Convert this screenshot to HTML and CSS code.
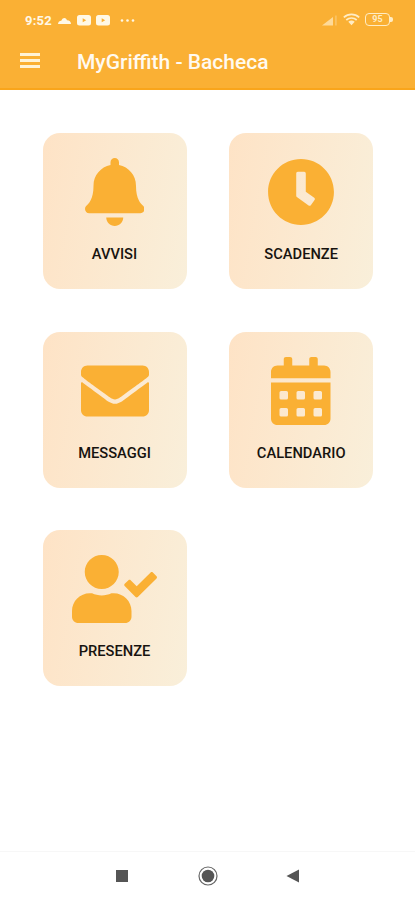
FILE: index.html
```html
<!DOCTYPE html>
<html lang="it">
<head>
  <meta charset="UTF-8" />
  <meta name="viewport" content="width=device-width, initial-scale=1.0" />
  <title>MyGriffith - Bacheca</title>
  <link rel="stylesheet" href="styles.css">
</head>
<body>
  <header class="header">
    <div class="statusbar">
      <span class="time">9:52</span>
      <svg class="notifications" width="80" height="14" viewBox="0 0 80 14" fill="currentColor">
        <path d="M1 11c0-2 1.500-3.200 3.500-3.500C5.800 4.300 8.800 4.300 10 7.200c2.500 0 4 1.500 4 3.800z"/>
        <path fill-rule="evenodd" d="M22.500 2h9a2.500 2.500 0 0 1 2.500 2.500v5.500a2.500 2.500 0 0 1-2.500 2.500h-9a2.500 2.500 0 0 1-2.500-2.500V4.500a2.500 2.500 0 0 1 2.500-2.500zM25.700 5.200v4L29.200 7.200z"/>
        <path fill-rule="evenodd" d="M41.500 2h9a2.500 2.500 0 0 1 2.500 2.500v5.500a2.500 2.500 0 0 1-2.500 2.500h-9a2.500 2.500 0 0 1-2.500-2.500V4.500a2.500 2.500 0 0 1 2.500-2.500zM44.700 5.200v4L48.200 7.200z"/>
        <circle cx="65" cy="7.500" r="1.300"/>
        <circle cx="70.500" cy="7.500" r="1.300"/>
        <circle cx="76" cy="7.500" r="1.300"/>
      </svg>
      <div class="system">
        <svg width="16" height="12" viewBox="0 0 16 12" fill="currentColor">
          <path d="M0 11.500L11 3v8.500z" opacity=".7"/>
          <path d="M13 1.500h1.800v10H13z" opacity=".3"/>
        </svg>
        <svg width="17" height="13" viewBox="0 0 17 13" fill="none" stroke="currentColor" stroke-width="1.700">
          <path d="M.8 4.300c4.400-4 11-4 15.400 0M3.300 7c3-2.700 7.400-2.700 10.400 0"/>
          <path d="M5.300 8.700c2-1.700 4.400-1.700 6.400 0L8.500 12.300z" fill="currentColor" stroke="none"/>
        </svg>
        <span class="battery">95</span>
      </div>
    </div>
    <div class="toolbar">
      <button class="menu" aria-label="Menu"><i></i><i></i><i></i></button>
      <h1>MyGriffith - Bacheca</h1>
    </div>
  </header>

  <main class="board">
    <a class="card">
      <svg class="icon" viewBox="0 0 448 512"><path d="M224 512c35.320 0 63.970-28.650 63.970-64H160.030c0 35.350 28.650 64 63.970 64zm215.390-149.710c-19.320-20.760-55.470-51.990-55.470-154.290 0-77.700-54.480-139.900-127.940-155.160V32c0-17.670-14.320-32-31.980-32s-31.980 14.330-31.980 32v20.840C118.560 68.100 64.080 130.300 64.080 208c0 102.300-36.150 133.530-55.470 154.290-6 6.450-8.660 14.160-8.610 21.710.11 16.400 12.980 32 32.100 32h383.800c19.120 0 32-15.600 32.100-32 .05-7.550-2.610-15.270-8.610-21.710z"/></svg>
      <span class="label">AVVISI</span>
    </a>
    <a class="card">
      <svg class="icon" viewBox="0 0 512 512"><path d="M256 8C119 8 8 119 8 256s111 248 248 248 248-111 248-248S393 8 256 8zm57.100 350.100L224.900 294c-3.100-2.300-4.900-5.900-4.900-9.700V116c0-6.600 5.400-12 12-12h48c6.600 0 12 5.400 12 12v137.700l63.500 46.200c5.400 3.900 6.500 11.400 2.600 16.800l-28.200 38.800c-3.900 5.300-11.400 6.500-16.800 2.600z"/></svg>
      <span class="label">SCADENZE</span>
    </a>
    <a class="card">
      <svg class="icon" viewBox="0 0 512 512"><path d="M502.300 190.800c3.900-3.100 9.700-.2 9.700 4.700V400c0 26.500-21.500 48-48 48H48c-26.500 0-48-21.500-48-48V195.600c0-5 5.700-7.800 9.700-4.700 22.400 17.400 52.100 39.500 154.100 113.600 21.100 15.400 56.700 47.800 92.200 47.600 35.700.3 72-32.800 92.300-47.600 102-74.100 131.600-96.300 154-113.700zM256 320c23.200.4 56.600-29.200 73.400-41.400 132.700-96.300 142.800-104.700 173.400-128.700 5.800-4.500 9.200-11.500 9.200-18.900v-19c0-26.500-21.500-48-48-48H48c-26.500 0-48 21.500-48 48v19c0 7.400 3.400 14.300 9.200 18.900 30.600 23.900 40.700 32.400 173.400 128.700 16.800 12.200 50.200 41.800 73.400 41.400z"/></svg>
      <span class="label">MESSAGGI</span>
    </a>
    <a class="card">
      <svg class="icon" viewBox="0 0 448 512"><path fill-rule="evenodd" d="M0 464c0 26.500 21.500 48 48 48h352c26.500 0 48-21.500 48-48V192H0zM76 256h40q12 0 12 12v40q0 12-12 12H76q-12 0-12-12v-40q0-12 12-12zM204 256h40q12 0 12 12v40q0 12-12 12h-40q-12 0-12-12v-40q0-12 12-12zM332 256h40q12 0 12 12v40q0 12-12 12h-40q-12 0-12-12v-40q0-12 12-12zM76 384h40q12 0 12 12v40q0 12-12 12H76q-12 0-12-12v-40q0-12 12-12zM204 384h40q12 0 12 12v40q0 12-12 12h-40q-12 0-12-12v-40q0-12 12-12zM332 384h40q12 0 12 12v40q0 12-12 12h-40q-12 0-12-12v-40q0-12 12-12z"/><path d="M400 64h-48V16c0-8.800-7.200-16-16-16h-32c-8.800 0-16 7.200-16 16v48H160V16c0-8.800-7.200-16-16-16h-32c-8.800 0-16 7.200-16 16v48H48C21.500 64 0 85.500 0 112v48h448v-48c0-26.500-21.500-48-48-48z"/></svg>
      <span class="label">CALENDARIO</span>
    </a>
    <a class="card">
      <svg class="icon" viewBox="0 0 640 512"><path d="M224 256c70.700 0 128-57.300 128-128S294.700 0 224 0 96 57.300 96 128s57.300 128 128 128zm89.600 32h-16.700c-22.200 10.200-46.900 16-72.900 16s-50.600-5.800-72.900-16h-16.700C60.200 288 0 348.200 0 422.400V464c0 26.500 21.500 48 48 48h352c26.500 0 48-21.500 48-48v-41.600c0-74.200-60.200-134.400-134.400-134.400zm323-128.400l-27.800-28.100c-4.600-4.700-12.100-4.700-16.800-.1l-104.800 104-45.500-45.800c-4.600-4.700-12.100-4.700-16.800-.1l-28.100 27.900c-4.700 4.600-4.700 12.100-.1 16.800l81.700 82.300c4.600 4.700 12.100 4.700 16.800.1l141.300-140.200c4.600-4.700 4.700-12.200.1-16.800z"/></svg>
      <span class="label">PRESENZE</span>
    </a>
  </main>

  <nav class="navbar">
    <svg width="20" height="20" viewBox="0 0 20 20"><path d="M4 4h12v12H4z"/></svg>
    <svg width="20" height="20" viewBox="0 0 20 20"><circle cx="10" cy="10" r="9" fill="none" stroke="#666" stroke-width="1.200"/><circle cx="10" cy="10" r="6.300"/></svg>
    <svg width="20" height="20" viewBox="0 0 20 20"><path d="M15 3.500v13L2.500 10z"/></svg>
  </nav>
</body>
</html>
```

FILE: styles.css
```css
* {
  box-sizing: border-box;
}
body {
  margin: 0;
  height: 900px;
  display: flex;
  flex-direction: column;
  background: #fff;
  font-family: Roboto, sans-serif;
}
.header {
  height: 90px;
  background: #fab034;
  border-bottom: 2px solid #f9a51b;
  color: #fff8e6;
}
.statusbar {
  display: flex;
  align-items: center;
  height: 40px;
  padding: 0 24px 0 25px;
}
.time {
  width: 32px;
  font-size: 13px;
  font-weight: 700;
  letter-spacing: 0.2px;
}
.notifications {
  margin-bottom: 1px;
}
.system {
  display: flex;
  align-items: center;
  gap: 5px;
  margin: 0 0 1px auto;
  color: #ffecc4;
}
.battery {
  position: relative;
  width: 25px;
  height: 13px;
  margin-right: 1px;
  border: 1.5px solid #ffecc4;
  border-radius: 4px;
  font-size: 9px;
  line-height: 11px;
  font-weight: 700;
  text-align: center;
}
.battery::after {
  content: "";
  position: absolute;
  right: -4px;
  top: 3px;
  width: 3px;
  height: 5px;
  border-radius: 0 2px 2px 0;
  background: #ffecc4;
}
.toolbar {
  display: flex;
  align-items: center;
  height: 44px;
  padding-left: 20px;
}
.menu {
  display: flex;
  flex-direction: column;
  gap: 3.5px;
  width: 20px;
  margin: 0 37px 3px 0;
  padding: 0;
  border: 0;
  background: none;
}
.menu i {
  height: 2.5px;
  background: #fff3d6;
}
h1 {
  margin: 0;
  font-size: 21px;
  font-weight: 500;
  color: #fffaf0;
}

/* Card grid */
.board {
  flex: 1;
  display: grid;
  grid-template-columns: 144px 144px;
  grid-auto-rows: 156px;
  gap: 42.7px;
  padding: 43px 0 0 42.5px;
}
.card {
  display: flex;
  flex-direction: column;
  align-items: center;
  padding-top: 25px;
  border-radius: 17px;
  background: linear-gradient(100deg, #fee3c6, #f9efda);
}
.icon {
  height: 68px;
  fill: #fab034;
}
.label {
  margin-top: 19px;
  font-size: 14.7px;
  line-height: 18px;
  font-weight: 500;
  color: #17130f;
}

.navbar {
  display: flex;
  justify-content: center;
  align-items: center;
  gap: 66px;
  height: 49px;
  padding-bottom: 1px;
  border-top: 1px solid #f7f7f7;
  fill: #555;
}
```
